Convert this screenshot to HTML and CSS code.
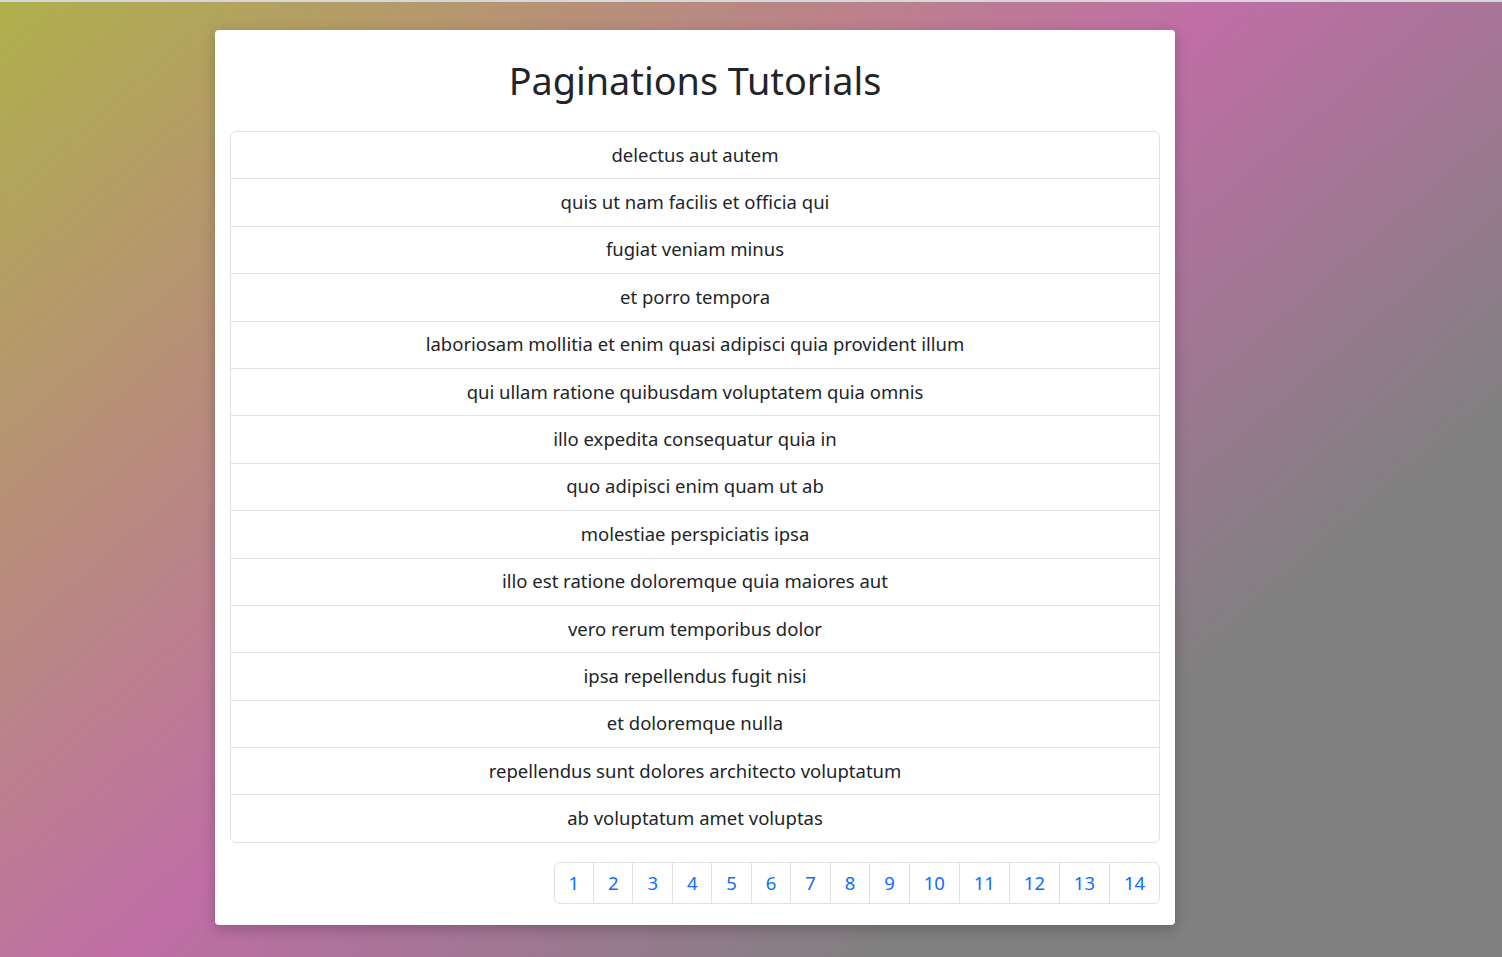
FILE: index.html
```html
<!DOCTYPE html>
<html lang="en">
<head>
<meta charset="utf-8">
<title>Paginations Tutorials</title>
<link rel="stylesheet" href="styles.css">
</head>
<body>
<div class="topline"></div>
<main class="page">
  <section class="card">
    <h1 class="title">Paginations Tutorials</h1>
    <ul class="list">
      <li class="item">delectus aut autem</li>
      <li class="item">quis ut nam facilis et officia qui</li>
      <li class="item">fugiat veniam minus</li>
      <li class="item">et porro tempora</li>
      <li class="item">laboriosam mollitia et enim quasi adipisci quia provident illum</li>
      <li class="item">qui ullam ratione quibusdam voluptatem quia omnis</li>
      <li class="item">illo expedita consequatur quia in</li>
      <li class="item">quo adipisci enim quam ut ab</li>
      <li class="item">molestiae perspiciatis ipsa</li>
      <li class="item">illo est ratione doloremque quia maiores aut</li>
      <li class="item">vero rerum temporibus dolor</li>
      <li class="item">ipsa repellendus fugit nisi</li>
      <li class="item">et doloremque nulla</li>
      <li class="item">repellendus sunt dolores architecto voluptatum</li>
      <li class="item">ab voluptatum amet voluptas</li>
    </ul>
    <nav class="pager">
      <ul class="pages">
        <li class="page-item"><a class="page-link" href="#">1</a></li>
        <li class="page-item"><a class="page-link" href="#">2</a></li>
        <li class="page-item"><a class="page-link" href="#">3</a></li>
        <li class="page-item"><a class="page-link" href="#">4</a></li>
        <li class="page-item"><a class="page-link" href="#">5</a></li>
        <li class="page-item"><a class="page-link" href="#">6</a></li>
        <li class="page-item"><a class="page-link" href="#">7</a></li>
        <li class="page-item"><a class="page-link" href="#">8</a></li>
        <li class="page-item"><a class="page-link" href="#">9</a></li>
        <li class="page-item"><a class="page-link" href="#">10</a></li>
        <li class="page-item"><a class="page-link" href="#">11</a></li>
        <li class="page-item"><a class="page-link" href="#">12</a></li>
        <li class="page-item"><a class="page-link" href="#">13</a></li>
        <li class="page-item"><a class="page-link" href="#">14</a></li>
      </ul>
    </nav>
  </section>
</main>
</body>
</html>
```

FILE: styles.css
```css
* { box-sizing: border-box; }

html, body {
  margin: 0;
  padding: 0;
}

body {
  min-height: 100vh;
  font-family: "Noto Sans", "Liberation Sans", sans-serif;
  color: #212529;
  background: linear-gradient(139deg, #afb04b 0%, #c06ea6 47%, #808080 76%, #808080 100%);
  background-attachment: fixed;
}

.topline {
  height: 2px;
  background: #d5d7da;
}

.page {
  padding: 28px 0 0 215px;
}

.card {
  width: 960px;
  background: #fff;
  border-radius: 4px;
  padding: 15px;
  box-shadow: 0 4px 14px rgba(0, 0, 0, 0.22);
}

.title {
  margin: 12px 0 26px;
  font-size: 37.8px;
  line-height: 48px;
  font-weight: 400;
  text-align: center;
  color: #212529;
}

.list {
  list-style: none;
  margin: 0;
  padding: 0;
  border: 1px solid #dee2e6;
  border-radius: 6px;
}

.item {
  height: 46.4px;
  display: flex;
  align-items: center;
  justify-content: center;
  font-size: 18.5px;
  padding: 0 18px 2px;
}

.item + .item {
  border-top: 1px solid #dee2e6;
  height: 47.4px;
}

.pager {
  display: flex;
  justify-content: flex-end;
  margin: 19px 0 6px;
}

.pages {
  display: flex;
  list-style: none;
  margin: 0;
  padding: 0;
}

.page-item + .page-item {
  margin-left: -1px;
}

.page-link {
  display: block;
  font-size: 18.5px;
  line-height: 28px;
  padding: 6px 13.95px;
  border: 1px solid #dee2e6;
  color: #0d6efd;
  text-decoration: none;
  background: #fff;
}

.page-item:first-child .page-link {
  border-radius: 6px 0 0 6px;
}

.page-item:last-child .page-link {
  border-radius: 0 6px 6px 0;
}
```
